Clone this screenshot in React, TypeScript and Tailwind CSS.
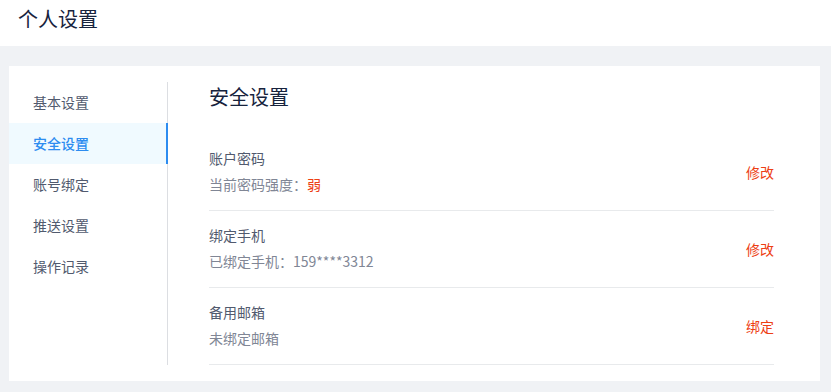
const menu = ["基本设置", "安全设置", "账号绑定", "推送设置", "操作记录"];

const items = [
  { title: "账户密码", desc: "当前密码强度：", strong: "弱", action: "修改" },
  { title: "绑定手机", desc: "已绑定手机：159****3312", action: "修改" },
  { title: "备用邮箱", desc: "未绑定邮箱", action: "绑定" },
];

export default function App() {
  const active = 1;
  return (
    <div
      className="min-h-screen bg-[#f0f2f5] text-[14px]"
      style={{ fontFamily: '"Noto Sans CJK SC", "Noto Sans", sans-serif' }}
    >
      <div className="h-[46px] bg-white pl-[18px] pt-[5px]">
        <h1 className="text-[20px] leading-[28px] text-[#17233d]">个人设置</h1>
      </div>

      <div className="pl-[9px] pr-[11px] pt-[20px] pb-[11px]">
        <div className="flex bg-white py-[16px]">
          <ul className="w-[159px] shrink-0 border-r border-[#dcdee2]">
            {menu.map((m, i) => (
              <li
                key={m}
                className={
                  i === active
                    ? "relative h-[41px] pl-[24px] leading-[41px] bg-[#f0faff] text-[#2d8cf0] font-medium"
                    : "h-[41px] pl-[24px] leading-[41px] text-[#515a6e]"
                }
              >
                {m}
                {i === active && (
                  <span className="absolute right-[-1px] top-0 h-full w-[2px] bg-[#2d8cf0]" />
                )}
              </li>
            ))}
          </ul>

          <div className="flex-1 pl-[41px] pr-[46px]">
            <h2 className="text-[20px] leading-[28px] text-[#17233d] pt-[1px] h-[52px]">安全设置</h2>
            {items.map((it) => (
              <div
                key={it.title}
                className="flex items-center justify-between border-b border-[#e8eaec] pt-[13px] pb-[15px]"
              >
                <div>
                  <div className="leading-[22px] text-[#515a6e]">{it.title}</div>
                  <div className="mt-[4px] leading-[22px] text-[#808695]">
                    {it.desc}
                    {it.strong && <span className="text-[#ed4014]">{it.strong}</span>}
                  </div>
                </div>
                <span className="text-[14px] text-[#ed4014] pt-[2px]">{it.action}</span>
              </div>
            ))}
          </div>
        </div>
      </div>
    </div>
  );
}
